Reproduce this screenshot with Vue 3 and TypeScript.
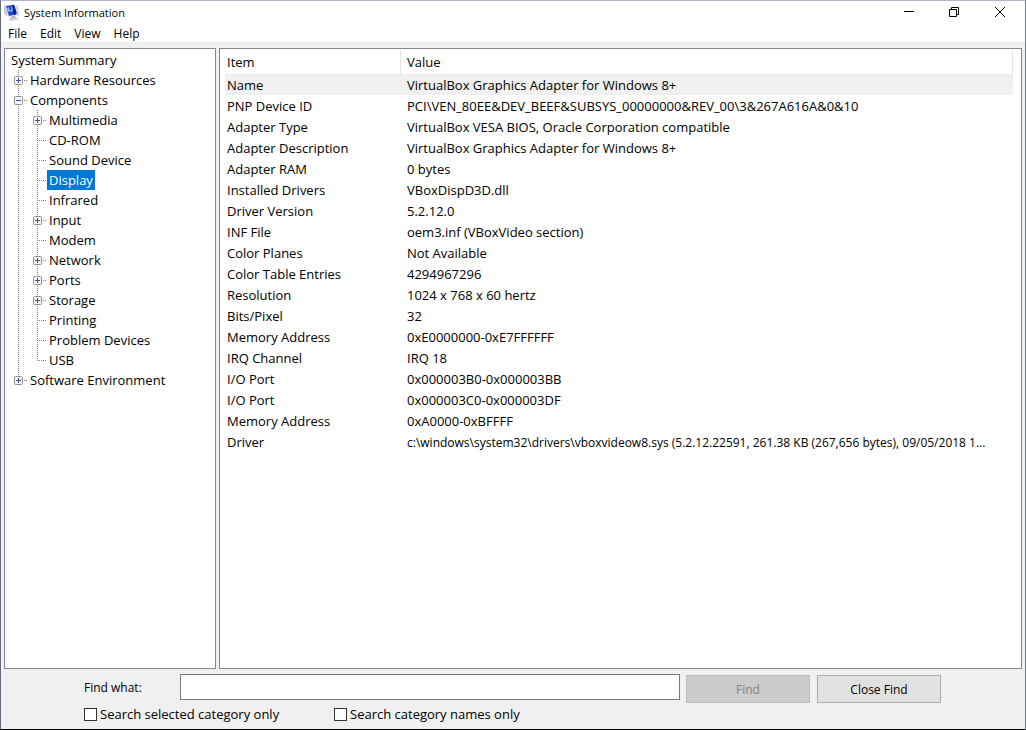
<script setup lang="ts">
import { computed, ref } from 'vue'

interface TreeNode {
  label: string
  depth: number
  branch?: 'open' | 'closed'
  last?: boolean
}

const menus = ['File', 'Edit', 'View', 'Help']

const nodes: TreeNode[] = [
  { label: 'System Summary', depth: 0 },
  { label: 'Hardware Resources', depth: 1, branch: 'closed' },
  { label: 'Components', depth: 1, branch: 'open' },
  { label: 'Multimedia', depth: 2, branch: 'closed' },
  { label: 'CD-ROM', depth: 2 },
  { label: 'Sound Device', depth: 2 },
  { label: 'Display', depth: 2 },
  { label: 'Infrared', depth: 2 },
  { label: 'Input', depth: 2, branch: 'closed' },
  { label: 'Modem', depth: 2 },
  { label: 'Network', depth: 2, branch: 'closed' },
  { label: 'Ports', depth: 2, branch: 'closed' },
  { label: 'Storage', depth: 2, branch: 'closed' },
  { label: 'Printing', depth: 2 },
  { label: 'Problem Devices', depth: 2 },
  { label: 'USB', depth: 2, last: true },
  { label: 'Software Environment', depth: 1, branch: 'closed', last: true },
]

const rows: [string, string][] = [
  ['Name', 'VirtualBox Graphics Adapter for Windows 8+'],
  ['PNP Device ID', 'PCI\\VEN_80EE&DEV_BEEF&SUBSYS_00000000&REV_00\\3&267A616A&0&10'],
  ['Adapter Type', 'VirtualBox VESA BIOS, Oracle Corporation compatible'],
  ['Adapter Description', 'VirtualBox Graphics Adapter for Windows 8+'],
  ['Adapter RAM', '0 bytes'],
  ['Installed Drivers', 'VBoxDispD3D.dll'],
  ['Driver Version', '5.2.12.0'],
  ['INF File', 'oem3.inf (VBoxVideo section)'],
  ['Color Planes', 'Not Available'],
  ['Color Table Entries', '4294967296'],
  ['Resolution', '1024 x 768 x 60 hertz'],
  ['Bits/Pixel', '32'],
  ['Memory Address', '0xE0000000-0xE7FFFFFF'],
  ['IRQ Channel', 'IRQ 18'],
  ['I/O Port', '0x000003B0-0x000003BB'],
  ['I/O Port', '0x000003C0-0x000003DF'],
  ['Memory Address', '0xA0000-0xBFFFF'],
  ['Driver', 'c:\\windows\\system32\\drivers\\vboxvideow8.sys (5.2.12.22591, 261.38 KB (267,656 bytes), 09/05/2018 1...'],
]

const selectedNode = ref('Display')
const selectedRow = ref(0)
const query = ref('')
const selectedOnly = ref(false)
const namesOnly = ref(false)
const canFind = computed(() => query.value.trim().length > 0)
</script>

<template>
  <div class="window">
    <header class="titlebar">
      <svg class="app-icon" width="16" height="18" viewBox="0 0 16 18" aria-hidden="true">
        <path d="M5 14l5-1 4 1 1 1-7 2-3-1z" fill="#d0d3d6" />
        <path d="M7 12l4-1 1 3-4 1z" fill="#b4b9c0" />
        <path d="M0 2l2-1 2 10-2 1-2-3z" fill="#c3cad6" />
        <path d="M1 2l10-2 3 10-10 3z" fill="#d7dcea" />
        <path d="M2 2l8-1 3 9-8 2z" fill="#2346cc" />
        <path d="M7 1l3 0 3 9-3 1z" fill="#0c1f94" />
        <path d="M3 4l2-1 1 4-2 1zM6 6l2-1 1 2-2 1zM7 2h1l1 3-1 1z" fill="#8cb4f2" />
        <path d="M12 1l2 1 1 9-2 1-1-2 1-1z" fill="#cbd0d9" />
      </svg>
      <h1 class="title">System Information</h1>
      <div class="controls">
        <button type="button" aria-label="Minimize">
          <svg width="12" height="12" viewBox="0 0 12 12"><path d="M2 5.5h10" stroke="#000" /></svg>
        </button>
        <button type="button" aria-label="Restore">
          <svg width="12" height="12" viewBox="0 0 12 12" fill="none" stroke="#000">
            <path d="M1.5 3.5h7v7h-7zM3.5 3V1.5h7v7H9" />
          </svg>
        </button>
        <button type="button" aria-label="Close">
          <svg width="12" height="12" viewBox="0 0 12 12"><path d="M1 1l10 10M11 1L1 11" stroke="#000" /></svg>
        </button>
      </div>
    </header>

    <nav class="menubar" aria-label="Main menu">
      <button v-for="menu in menus" :key="menu" type="button">{{ menu }}</button>
    </nav>

    <main class="panes">
      <ul class="tree" role="tree" aria-label="Categories">
        <li v-for="node in nodes" :key="node.label" role="treeitem" :aria-selected="selectedNode === node.label">
          <svg v-if="node.depth === 2" class="guide" width="19" height="20" viewBox="0 0 19 20" aria-hidden="true">
            <path d="M9.5 0v20" class="dots" />
          </svg>
          <svg v-if="node.depth > 0" class="guide" width="19" height="20" viewBox="0 0 19 20" aria-hidden="true">
            <path :d="node.last ? 'M9.5 0v11' : 'M9.5 0v20'" class="dots" />
            <path d="M9 10.5h10" class="dots" />
            <template v-if="node.branch">
              <rect x="5.5" y="6.5" width="8" height="8" rx="1" fill="#f4f4f4" stroke="#919191" />
              <path d="M7 10.5h5" stroke="#3a50a0" />
              <path v-if="node.branch === 'closed'" d="M9.5 8v5" stroke="#3a50a0" />
            </template>
          </svg>
          <button
            type="button"
            class="node"
            :class="{ selected: selectedNode === node.label }"
            @click="selectedNode = node.label"
          >{{ node.label }}</button>
        </li>
      </ul>

      <section class="details">
        <table>
          <thead>
            <tr>
              <th scope="col" class="item">Item</th>
              <th scope="col">Value</th>
            </tr>
          </thead>
          <tbody>
            <tr
              v-for="(row, index) in rows"
              :key="index"
              :class="{ current: index === selectedRow }"
              @click="selectedRow = index"
            >
              <td>{{ row[0] }}</td>
              <td :class="{ long: row[1].length > 80 }">{{ row[1] }}</td>
            </tr>
          </tbody>
        </table>
      </section>
    </main>

    <form class="find" @submit.prevent>
      <div class="find-row">
        <label class="find-label" for="find-text">Find what:</label>
        <input id="find-text" v-model="query" class="find-text" type="text" />
        <button type="submit" class="push first" :disabled="!canFind">Find</button>
        <button type="button" class="push">Close Find</button>
      </div>
      <div class="options">
        <label><input v-model="selectedOnly" type="checkbox" />Search selected category only</label>
        <label><input v-model="namesOnly" type="checkbox" />Search category names only</label>
      </div>
    </form>
  </div>
</template>

<style>
body {
  margin: 0;
}
</style>

<style scoped>
.window {
  box-sizing: border-box;
  min-height: 100vh;
  display: flex;
  flex-direction: column;
  background: #f0f0f0;
  border: 1px solid #737a80;
  border-top-color: #b1b7ca;
  border-left-color: #626a7d;
  border-bottom-color: #000;
  color: #000;
  font-family: "Open Sans", "Noto Sans", sans-serif;
  font-size: 13px;
  line-height: 20px;
}

button,
input {
  font: inherit;
  color: inherit;
}

button {
  border: 0;
  padding: 0;
  background: none;
}

.titlebar {
  display: flex;
  align-items: center;
  height: 24px;
  padding-left: 3px;
  background: #fff;
}

.title {
  flex: 1;
  margin: 0 0 0 4px;
  font-size: 11px;
  font-weight: 400;
}

.controls {
  display: flex;
  align-self: flex-start;
}

.controls button {
  display: flex;
  align-items: center;
  justify-content: center;
  width: 46px;
  height: 21px;
}

.controls button:last-child {
  margin-right: 2px;
}

.menubar {
  display: flex;
  gap: 13px;
  height: 17px;
  padding-left: 7px;
  background: #fff;
  font-size: 12px;
}

.menubar button {
  line-height: 17px;
}

.panes {
  flex: 1;
  display: flex;
  gap: 3px;
  padding: 6px 3px 0;
}

.tree {
  box-sizing: border-box;
  flex: none;
  width: 212px;
  margin: 0;
  padding: 1px 4px;
  list-style: none;
  background: #fff;
  border: 1px solid #828790;
}

.tree li {
  display: flex;
  height: 20px;
}

.guide {
  flex: none;
}

.dots {
  fill: none;
  stroke: #808080;
  stroke-dasharray: 1 1;
}

.node {
  padding: 0 2px;
  white-space: nowrap;
}

.node.selected {
  background: #0078d7;
  color: #fff;
}

.details {
  flex: 1;
  min-width: 0;
  padding: 1px 8px 0 5px;
  background: #fff;
  border: 1px solid #828790;
}

table {
  width: 100%;
  table-layout: fixed;
  border-collapse: separate;
  border-spacing: 0;
}

th,
td {
  box-sizing: border-box;
  height: 21px;
  padding: 2px 0 0 6px;
  line-height: 19px;
  font-weight: 400;
  text-align: left;
  white-space: nowrap;
  overflow: hidden;
  text-overflow: ellipsis;
}

th {
  height: 24px;
  padding-top: 0;
  border-right: 1px solid #e5e5e5;
}

.item {
  width: 176px;
}

th:first-child,
td:first-child {
  padding-left: 2px;
}

.long {
  font-size: 12px;
}

.current {
  background: #f0f0f0;
}

.find {
  box-sizing: border-box;
  width: 100%;
  max-width: 858px;
  margin: 0 auto;
  padding: 5px 1px 4px 0;
}

.find-row {
  display: flex;
  align-items: flex-start;
}

.find-label {
  width: 96px;
  line-height: 28px;
  font-size: 12px;
}

.find-text {
  box-sizing: border-box;
  flex: 1;
  min-width: 0;
  height: 26px;
  padding: 0 4px;
  background: #fff;
  border: 1px solid #7a7a7a;
  border-radius: 0;
}

.push {
  box-sizing: border-box;
  width: 124px;
  height: 28px;
  margin: 1px 0 0 7px;
  padding-top: 2px;
  background: #e1e1e1;
  border: 1px solid #adadad;
  font-size: 12px;
}

.push.first {
  margin-left: 6px;
}

.push:disabled {
  background: #ccc;
  border-color: #bfbfbf;
  color: #838383;
}

.options {
  display: flex;
}

.options label {
  display: flex;
  align-items: center;
  width: 250px;
  height: 22px;
}

.options input {
  appearance: none;
  box-sizing: border-box;
  width: 13px;
  height: 13px;
  margin: 0 3px 0 0;
  background: #fff;
  border: 1px solid #333;
}

.options input:checked {
  background: #0078d7;
}
</style>
